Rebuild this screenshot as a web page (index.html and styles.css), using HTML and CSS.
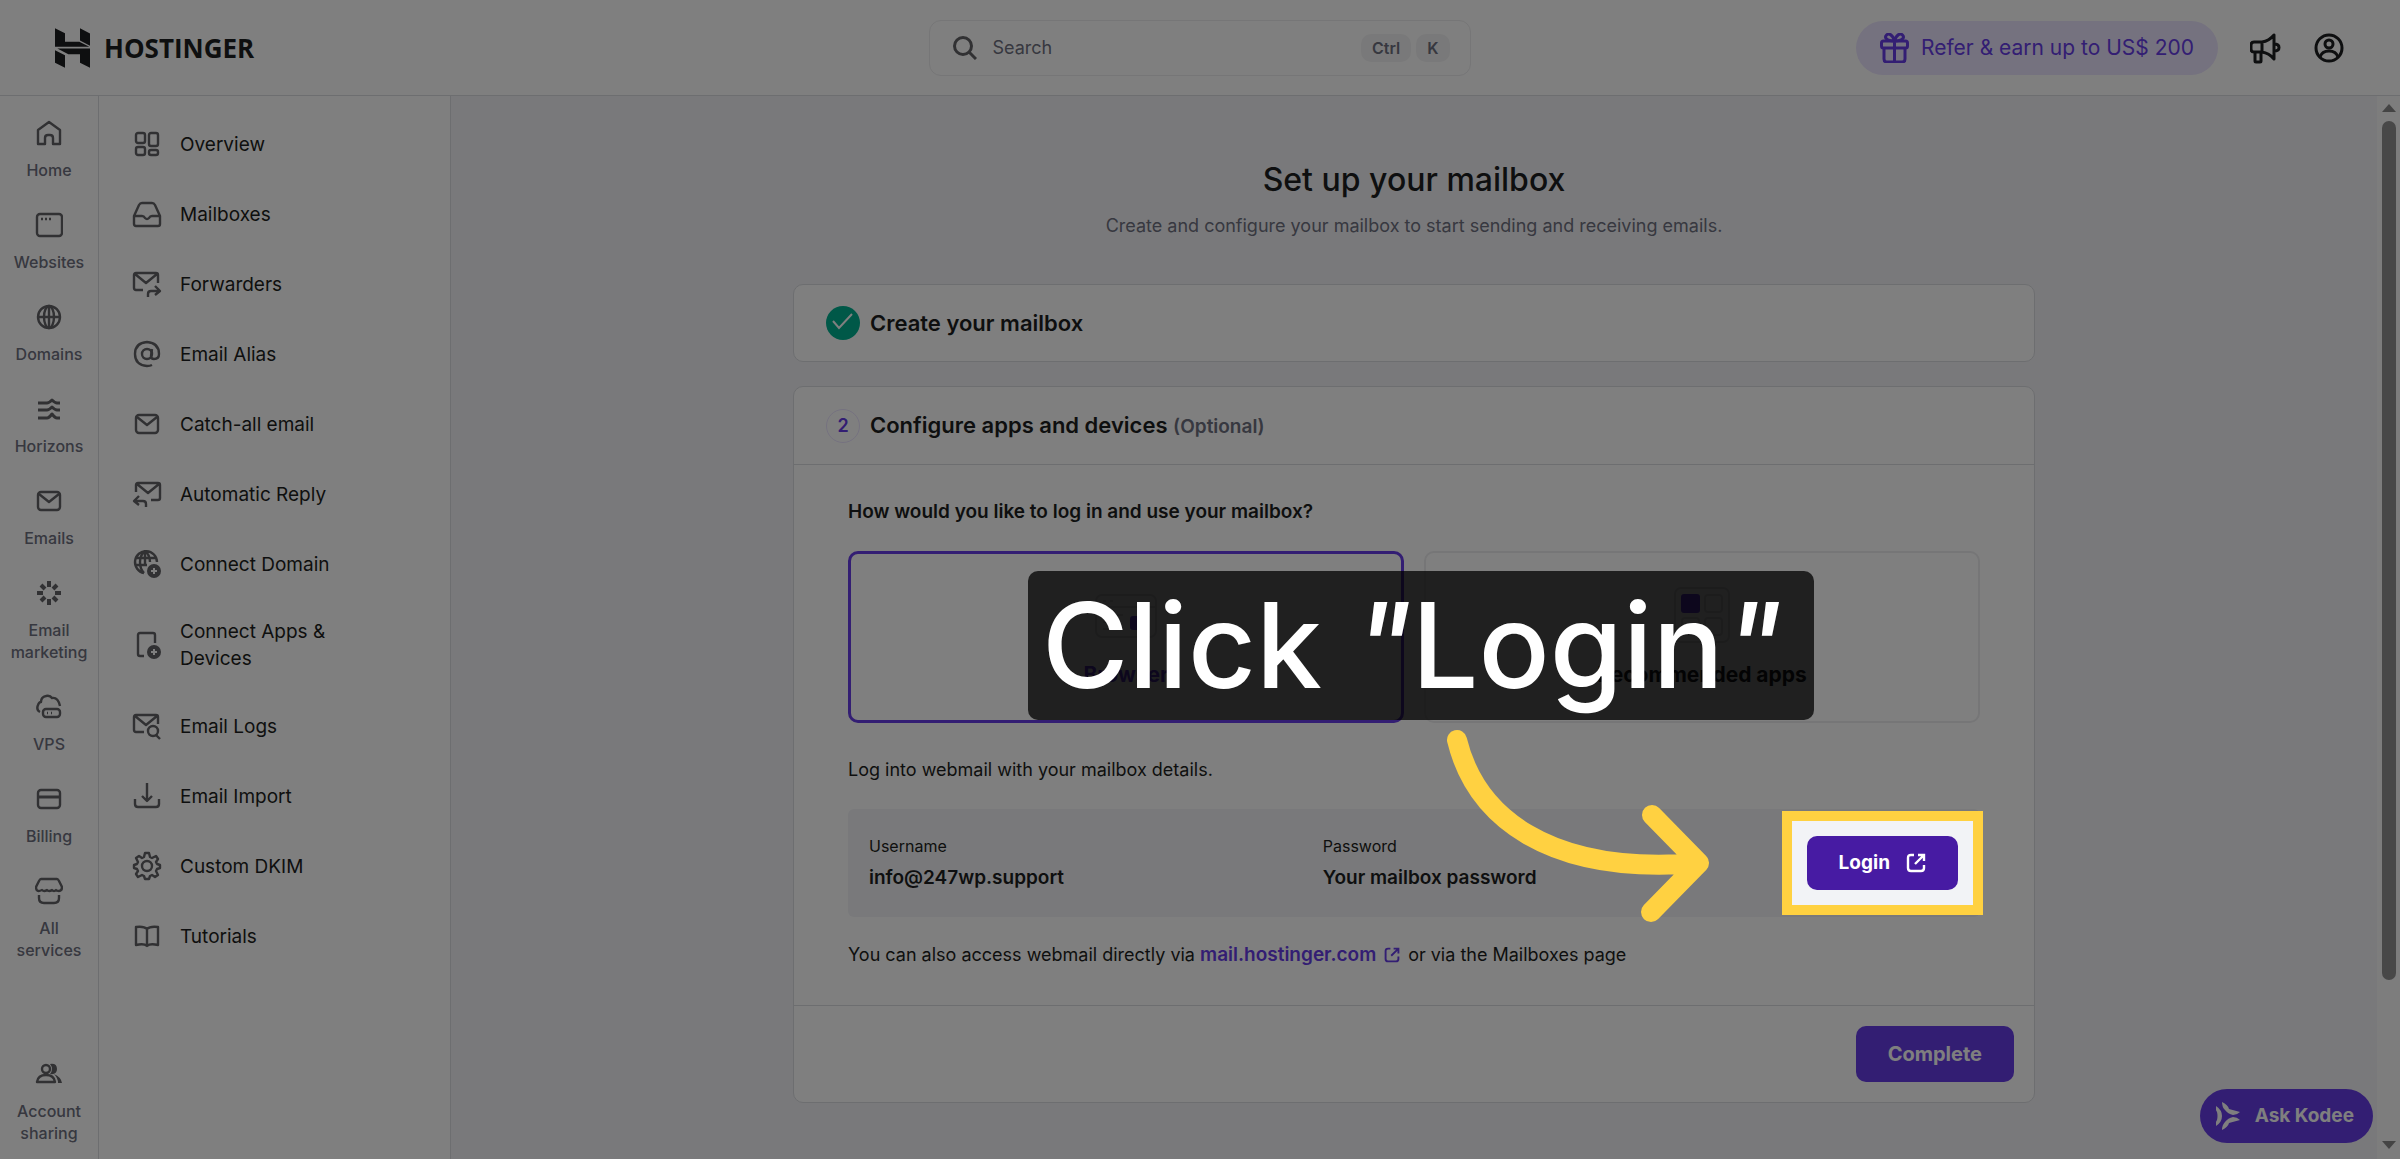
FILE: index.html
```html
<!DOCTYPE html>
<html lang="en">
<head>
<meta charset="utf-8">
<meta name="viewport" content="width=device-width, initial-scale=1">
<title>Set up your mailbox</title>
<link rel="stylesheet" href="styles.css">
</head>
<body>
<header class="topbar">
  <a class="logo" href="#" aria-label="Hostinger">
    <svg width="35" height="40" viewBox="0 0 105 119" fill="currentColor" aria-hidden="true"><path d="M0 0l30 15v26h43l30 15H0zM75 0l30 16v37L75 37zM7 61h98v58l-30-15V78H40zM0 66l30 15v38L0 104z"/></svg>
    <span>HOSTINGER</span>
  </a>
  <label class="search">
    <svg width="24" height="24" viewBox="0 0 24 24" aria-hidden="true"><circle cx="10" cy="10" r="8.5"/><path d="M16 16l7 7"/></svg>
    <input type="search" placeholder="Search" aria-label="Search">
    <kbd>Ctrl</kbd><kbd>K</kbd>
  </label>
  <div class="actions">
    <button class="refer" type="button">
      <svg width="29" height="30" viewBox="0 0 29 30" aria-hidden="true"><rect x="1.5" y="8" width="26" height="7" rx="2"/><path d="M4 15v11q0 3 3 3h15q3 0 3-3V15M14.500 8v21M14.500 8c-9 0-10-4-8-6s6-1 8 6c2-7 6-8 8-6s1 6-8 6"/></svg>
      Refer &amp; earn up to US$ 200
    </button>
    <button class="icon-button" type="button" aria-label="What's new">
      <svg width="32" height="32" viewBox="0 0 32 32" aria-hidden="true"><path d="M12 10H4q-3 0-3 3v4q0 3 3 3h8zM12 10q7-1 12-7v24q-5-6-12-7M5 20v9q0 1 1 1h4q1 0 1-1v-9M24 12q5 0 5 3.500t-5 3.500"/></svg>
    </button>
    <button class="icon-button" type="button" aria-label="Account">
      <svg width="30" height="30" viewBox="0 0 30 30" aria-hidden="true"><circle cx="15" cy="15" r="13"/><circle cx="15" cy="11" r="4"/><path d="M6 24q2-6 9-6t9 6"/></svg>
    </button>
  </div>
</header>

<div class="shell">
  <nav class="rail" aria-label="Products">
    <a href="#"><svg viewBox="0 0 28 28"><path d="M3 11l11-8 11 8v14h-7v-6q0-3-3-3h-2q-3 0-3 3v6H3z"/></svg>Home</a>
    <a href="#"><svg viewBox="0 0 28 28"><rect x="2" y="3" width="25" height="22" rx="3"/><path d="M6 8h2M10 8h2M14 8h2"/></svg>Websites</a>
    <a href="#"><svg viewBox="0 0 28 28"><circle cx="14" cy="14" r="11"/><ellipse cx="14" cy="14" rx="5" ry="11"/><path d="M14 3v22M3 14h22"/></svg>Domains</a>
    <a href="#"><svg class="bold" viewBox="0 0 28 28"><path d="M3 8h9q2 0 5-3 3 3 5 3h3M3 15h9q2 0 5-3 3 3 5 3h3M3 23h9q2 0 5-4 3 4 5 4h3"/></svg>Horizons</a>
    <a href="#"><svg viewBox="0 0 28 28"><rect x="3" y="5" width="22" height="18" rx="3"/><path d="M4 7l10 8 10-8"/></svg>Emails</a>
    <a href="#"><svg class="burst" viewBox="0 0 28 28"><path d="M14 2v6M22 6l-4 4M26 14h-6M22 22l-4-4M14 26v-6M6 22l4-4M2 14h6M6 6l4 4"/></svg>Email marketing</a>
    <a href="#"><svg viewBox="0 0 28 28"><path d="M5 19q-4-2-2-7 1-3 3-3 0-5 5-6 4-1 6 2 6-1 8 8"/><rect x="8" y="16" width="17" height="8" rx="3"/><path d="M12 20h1M16 20h1"/></svg>VPS</a>
    <a href="#"><svg viewBox="0 0 28 28"><rect x="3" y="5" width="22" height="18" rx="3"/><path class="thick" d="M3 12h22"/></svg>Billing</a>
    <a href="#"><svg viewBox="0 0 28 28"><path d="M6 2h16q1 0 2 2l3 6q0 4-3 4-2 0-3-1-2 2-4 0-3 2-5 0-3 2-5 0-6 3-6-3l3-6q1-2 2-2zM4 18v3q0 5 5 5h10q5 0 5-5v-3"/></svg>All services</a>
    <a class="last" href="#"><svg viewBox="0 0 28 28"><circle cx="11" cy="9" r="4"/><path d="M2 22q1-7 9-7t9 7z"/><path class="solid" d="M15 4q7-1 7 5t-7 5q4-5 0-10zM19 14q7 3 8 9h-4q0-5-4-9z"/></svg>Account sharing</a>
  </nav>

  <nav class="sidebar" aria-label="Emails">
    <a href="#"><svg viewBox="0 0 30 30"><rect x="4" y="4" width="9" height="10" rx="2"/><rect x="17" y="4" width="9" height="13" rx="2"/><rect x="4" y="18" width="9" height="8" rx="2"/><rect x="17" y="21" width="9" height="5" rx="2"/></svg><span>Overview</span></a>
    <a href="#"><svg viewBox="0 0 30 30"><path d="M2 17L7 6q1-2 3-2h10q2 0 3 2l5 11v8q0 2-2 2H4q-2 0-2-2zM2 17h8q2 0 3 2 2 2 4 0 1-2 3-2h8"/></svg><span>Mailboxes</span></a>
    <a href="#"><svg viewBox="0 0 30 30"><path d="M11 21H4q-2 0-2-2V6q0-2 2-2h20q2 0 2 2v8M3 5l11 9L25 5M16 28v-3q0-3 3-3h8M23 17l5 5-5 4"/></svg><span>Forwarders</span></a>
    <a href="#"><svg viewBox="0 0 30 30"><circle cx="15" cy="15" r="5"/><path d="M20 10l-1 7q0 3 3 3 5 0 5-5 0-11-12-12Q3 4 3 15t12 12q3 0 5-1"/></svg><span>Email Alias</span></a>
    <a href="#"><svg viewBox="0 0 30 30"><rect x="4" y="6" width="22" height="18" rx="3"/><path d="M5 8l10 8 10-8"/></svg><span>Catch-all email</span></a>
    <a href="#"><svg viewBox="0 0 30 30"><path d="M4 13V6q0-2 2-2h20q2 0 2 2v13q0 2-2 2h-7M5 5l11 9L27 5M14 28v-3q0-3-3-3H3M7 17l-5 5 5 4"/></svg><span>Automatic Reply</span></a>
    <a href="#"><svg viewBox="0 0 30 30"><path d="M25 13A11 11 0 1 0 12 24M13 2q-5 4-5 11t4 11M13 2q5 4 5 11M3 9h20M3 16h12M13 2v14"/><circle class="solid" cx="22" cy="22" r="7"/><path class="cut" d="M22 19v6M19 22h6"/></svg><span>Connect Domain</span></a>
    <a href="#"><svg viewBox="0 0 30 30"><path d="M12 26H8q-2 0-2-2V5q0-2 2-2h13q2 0 2 2v8"/><circle class="solid" cx="22" cy="22" r="7"/><path class="cut" d="M22 19v6M19 22h6"/></svg><span>Connect Apps &amp; Devices</span></a>
    <a href="#"><svg viewBox="0 0 30 30"><path d="M12 21H4q-2 0-2-2V6q0-2 2-2h20q2 0 2 2v7M3 5l11 9L25 5"/><circle cx="21" cy="20" r="5"/><path d="M24 24l4 4"/></svg><span>Email Logs</span></a>
    <a href="#"><svg viewBox="0 0 30 30"><path d="M15 2v17M10 15l5 5 5-5M3 18v5q0 3 3 3h18q3 0 3-3v-5"/></svg><span>Email Import</span></a>
    <a href="#"><svg viewBox="0 0 30 30"><circle cx="15" cy="15" r="5"/><path d="M13 2h4l1 4 2 1 4-2 2 3-2 3 1 2 3 1v3l-3 1-1 2 2 4-3 2-3-2-2 1-1 3h-4l-1-3-2-1-4 2-2-3 2-3-1-2-3-1v-3l3-1 1-2-2-4 3-2 3 2 2-1z"/></svg><span>Custom DKIM</span></a>
    <a href="#"><svg viewBox="0 0 30 30"><path d="M15 8q-3-3-11-2v18q8-2 11 1 3-3 11-1V6q-8-1-11 2zM15 8v17"/></svg><span>Tutorials</span></a>
  </nav>

  <main class="content">
    <h1>Set up your mailbox</h1>
    <p class="lead">Create and configure your mailbox to start sending and receiving emails.</p>

    <section class="card">
      <h2 class="card-head">
        <svg class="check" width="34" height="34" viewBox="0 0 34 34" aria-hidden="true"><circle cx="17" cy="17" r="17"/><path d="M7 15l6 7L26 8"/></svg>
        Create your mailbox
      </h2>
    </section>

    <section class="card">
      <h2 class="card-head divided">
        <span class="step">2</span>
        <span>Configure apps and devices <small>(Optional)</small></span>
      </h2>
      <div class="card-body">
        <h3 id="login-question">How would you like to log in and use your mailbox?</h3>
        <div class="options" role="radiogroup" aria-labelledby="login-question">
          <label class="option">
            <input type="radio" name="login" checked>
            <svg width="64" height="56" viewBox="0 0 64 56" aria-hidden="true"><rect x="2" y="8" width="60" height="42" rx="6"/><path d="M9 14h3M16 14h3M2 20h60M9 28h20M9 35h16M9 42h20"/><rect class="accent" x="36" y="29" width="18" height="14" rx="3"/></svg>
            <span>Browser</span>
          </label>
          <label class="option">
            <input type="radio" name="login">
            <svg width="56" height="56" viewBox="0 0 56 56" aria-hidden="true"><rect x="1" y="1" width="54" height="54" rx="6"/><rect class="accent" x="7" y="7" width="19" height="19" rx="3"/><rect x="31" y="8" width="17" height="17" rx="3"/><rect x="8" y="31" width="17" height="17" rx="3"/><rect x="31" y="31" width="17" height="17" rx="3"/></svg>
            <span>Recommended apps</span>
          </label>
          <div class="callout">Click <i>"</i>Login<i>"</i></div>
          <svg class="arrow" width="290" height="210" viewBox="0 0 290 210" aria-hidden="true"><path d="M25 24c18 74 88 136 242 123M220 99l47 48-48 49"/></svg>
        </div>
        <p>Log into webmail with your mailbox details.</p>
        <div class="credentials">
          <dl><dt>Username</dt><dd>info@247wp.support</dd></dl>
          <dl><dt>Password</dt><dd>Your mailbox password</dd></dl>
          <div class="login">
            <button class="button login-button" type="button">Login
              <svg width="20" height="20" viewBox="0 0 20 20" aria-hidden="true"><path d="M8 2H5Q2 2 2 5v10q0 3 3 3h10q3 0 3-3v-3M12 2h6v6M18 2L9 11"/></svg>
            </button>
            <span class="spotlight"></span>
          </div>
        </div>
        <p>You can also access webmail directly via <a class="link" href="#">mail.hostinger.com <svg width="16" height="16" viewBox="0 0 20 20" aria-hidden="true"><path d="M8 2H5Q2 2 2 5v10q0 3 3 3h10q3 0 3-3v-3M12 2h6v6M18 2L9 11"/></svg></a> or via the Mailboxes page</p>
      </div>
      <footer class="card-foot"><button class="button" type="button">Complete</button></footer>
    </section>
  </main>

  <div class="scrollbar" aria-hidden="true">
    <svg width="14" height="8" viewBox="0 0 14 8"><path d="M7 0l7 8H0z"/></svg>
    <div class="track"><div class="thumb"></div></div>
    <svg width="14" height="8" viewBox="0 0 14 8"><path d="M0 0h14L7 8z"/></svg>
  </div>
</div>

<button class="kodee" type="button">
  <svg width="25" height="28" viewBox="0 0 25 28" fill="currentColor" aria-hidden="true"><path d="M0 4q6 4 6 10t-6 10q-1-3 1-6 1-4 0-8-2-3-1-6zM6 0q6 3 7 7l11 3q-3 3-7 3-5-1-8-5Q6 5 6 0zM6 28q6-3 7-7l11-3q-3-3-7-3-5 1-8 5-3 3-3 8z"/></svg>
  Ask Kodee
</button>
</body>
</html>
```
FILE: styles.css
```css
:root {
  --ink: #1d1e20;
  --muted: #6e7080;
  --icon: #626266;
  --line: #dadce0;
  --surface: #f3f3f6;
  --brand: #673de6;
  --marker: #ffd141;
}

* { box-sizing: border-box; }

body {
  margin: 0;
  min-height: 100vh;
  display: flex;
  flex-direction: column;
  background: #fff;
  color: var(--ink);
  font: 400 18px/28px Inter, sans-serif;
}

h1, h2, h3, p, dl, dd { margin: 0; }
a { color: inherit; text-decoration: none; }
button { border: 0; background: none; color: inherit; font: inherit; padding: 0; cursor: pointer; }
svg { flex: none; }

/* Top bar */
.topbar {
  display: grid;
  grid-template-columns: 1fr 542px 1fr;
  align-items: center;
  height: 96px;
  padding: 0 56px 0 55px;
  border-bottom: 1px solid var(--line);
}
.logo {
  display: flex;
  align-items: center;
  gap: 14px;
  font: 700 26px/40px "Open Sans", sans-serif;
}
.search {
  display: flex;
  align-items: center;
  gap: 5px;
  height: 56px;
  padding: 0 20px 0 23px;
  border: 1px solid #ececee;
  border-radius: 12px;
}
.search svg { fill: none; stroke: var(--icon); stroke-width: 3; margin-right: 11px; }
.search input {
  flex: 1;
  min-width: 0;
  border: 0;
  padding: 0;
  outline: 0;
  background: none;
  font: inherit;
}
.search input::placeholder { color: var(--muted); opacity: 1; }
.search kbd {
  padding: 0 11px;
  border-radius: 10px;
  background: #f3f3f4;
  color: var(--muted);
  font: 600 16px/28px Inter, sans-serif;
}
.actions { display: flex; justify-content: flex-end; align-items: center; gap: 32px; }
.actions svg {
  display: block;
  fill: none;
  stroke: currentColor;
  stroke-width: 3;
  stroke-linejoin: round;
}
.refer {
  display: flex;
  align-items: center;
  gap: 12px;
  height: 54px;
  padding: 0 24px;
  border-radius: 27px;
  background: #ebe4ff;
  color: var(--brand);
  font-size: 21px;
}

/* Layout */
.shell { flex: 1; display: flex; }

.rail {
  width: 99px;
  flex: none;
  display: flex;
  flex-direction: column;
  padding-top: 8px;
  border-right: 1px solid var(--line);
}
.rail a {
  display: flex;
  flex-direction: column;
  align-items: center;
  gap: 12px;
  padding: 15px 8px;
  color: var(--muted);
  font-size: 16px;
  font-weight: 500;
  line-height: 22px;
  text-align: center;
}
.rail .last { margin-top: auto; }
.rail svg { width: 28px; height: 28px; }
.rail svg, .sidebar svg {
  fill: none;
  stroke: var(--icon);
  stroke-width: 2.4;
  stroke-linejoin: round;
}
.rail .bold, .rail .thick { stroke-width: 3; }
.rail .burst { stroke-width: 4; }
.solid { fill: var(--icon); stroke: none; }
.sidebar .cut { stroke: #fff; stroke-width: 2; }

.sidebar {
  width: 352px;
  flex: none;
  padding: 13px 33px 0;
  border-right: 1px solid var(--line);
}
.sidebar a {
  display: flex;
  align-items: center;
  gap: 18px;
  min-height: 70px;
  padding: 19px 0;
  font-size: 19px;
  line-height: 27px;
}
.sidebar svg { width: 30px; height: 30px; }
.sidebar span { max-width: 180px; }

.content {
  flex: 1;
  min-width: 0;
  padding: 64px 24px 16px;
  background: var(--surface);
}
h1 { font-size: 32px; font-weight: 500; line-height: 40px; text-align: center; }
.lead { margin: 12px 0 44px; color: var(--muted); text-align: center; }

.card {
  max-width: 1242px;
  margin: 0 auto 24px;
  border: 1px solid var(--line);
  border-radius: 10px;
  background: #fff;
}
.card-head {
  display: flex;
  align-items: center;
  gap: 10px;
  height: 76px;
  padding: 0 32px;
  font-size: 22px;
  font-weight: 600;
}
.card-head small { color: var(--muted); font-size: 19px; }
.divided { height: 78px; border-bottom: 1px solid var(--line); }
.check { fill: #00b090; }
.check path { fill: none; stroke: #fff; stroke-width: 2; }
.step {
  width: 34px;
  height: 34px;
  border: 1px solid #ebe4ff;
  border-radius: 17px;
  color: var(--brand);
  font-size: 18px;
  line-height: 32px;
  text-align: center;
}

.card-body { padding: 33px 54px 36px; }
h3 { font-size: 19px; font-weight: 600; }

.options {
  position: relative;
  display: grid;
  grid-template-columns: 1fr 1fr;
  gap: 20px;
  margin: 25px 0 33px;
}
.option {
  display: flex;
  flex-direction: column;
  align-items: center;
  gap: 16px;
  height: 172px;
  padding-top: 34px;
  border: 2px solid #ececee;
  border-radius: 10px;
  font-size: 21px;
  font-weight: 700;
  line-height: 32px;
}
.option:has(:checked) { border: 3px solid var(--brand); padding-top: 33px; color: var(--brand); }
.option input { position: absolute; opacity: 0; }
.option svg { fill: none; stroke: var(--line); stroke-width: 2; }
.option .accent { fill: var(--brand); stroke: none; }

.credentials {
  display: grid;
  grid-template-columns: 5fr 5fr 2fr;
  align-items: center;
  height: 108px;
  margin: 25px 0 24px;
  padding: 0 22px 0 21px;
  border-radius: 6px;
  background: #f2f3f6;
}
dt { margin-bottom: 6px; font-size: 16px; line-height: 24px; }
dd { font-size: 19px; font-weight: 600; }
.login { position: relative; justify-self: end; }

.button {
  height: 56px;
  padding: 0 32px;
  border-radius: 10px;
  background: var(--brand);
  color: #fff;
  font-size: 19px;
  font-weight: 700;
}
.login-button {
  display: flex;
  align-items: center;
  gap: 16px;
  height: 54px;
  background: #471ba3;
}
.login-button svg, .link svg { fill: none; stroke: currentColor; stroke-width: 2.4; }
.link { color: var(--brand); font-size: 19px; font-weight: 600; }
.link svg { vertical-align: -2px; margin: 0 3px; }
.card-foot {
  display: flex;
  justify-content: flex-end;
  padding: 20px;
  border-top: 1px solid var(--line);
}
.card-foot .button { font-size: 20px; }

/* Scroll bar */
.scrollbar {
  width: 23px;
  flex: none;
  display: flex;
  flex-direction: column;
  align-items: center;
  gap: 9px;
  padding: 8px 0 10px;
  background: #fafafa;
  fill: #888;
}
.track { flex: 1; }
.thumb { width: 14px; height: 85%; border-radius: 7px; background: #909090; }

.kodee {
  position: fixed;
  right: 27px;
  bottom: 16px;
  display: flex;
  align-items: center;
  gap: 14px;
  height: 54px;
  padding: 0 19px 0 16px;
  border-radius: 27px;
  background: var(--brand);
  color: #fff;
  font-size: 19px;
  font-weight: 700;
}

/* Guided tour: dims the page except for the highlighted control */
.spotlight {
  position: absolute;
  inset: -25px;
  z-index: 10;
  border: 10px solid var(--marker);
  box-shadow: 0 0 0 4000px rgba(0, 0, 0, .5);
  pointer-events: none;
}
.callout {
  position: absolute;
  left: 180px;
  top: 20px;
  z-index: 11;
  padding: 0 32px 0 14px;
  border-radius: 10px;
  background: rgba(0, 0, 0, .75);
  color: #fff;
  font-size: 118px;
  font-weight: 500;
  line-height: 149px;
  white-space: nowrap;
}
.arrow {
  position: absolute;
  left: 584px;
  top: 165px;
  z-index: 11;
  fill: none;
  stroke: var(--marker);
  stroke-width: 20;
  stroke-linecap: round;
  stroke-linejoin: round;
}
```
